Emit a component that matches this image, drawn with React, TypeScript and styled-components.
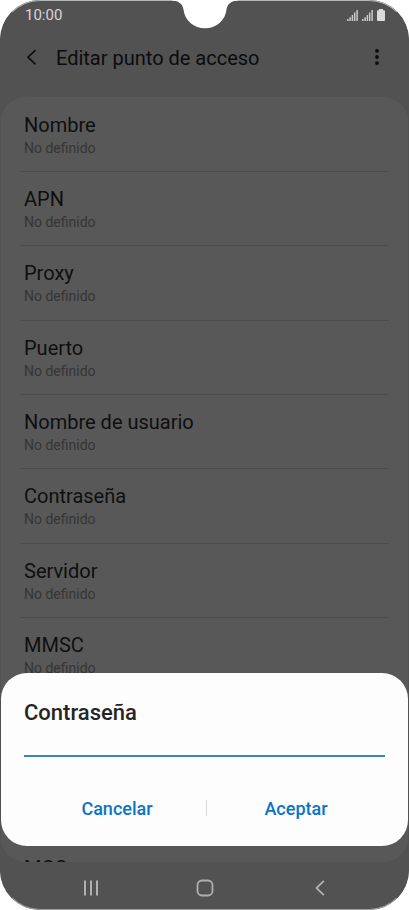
import React from 'react';
import styled, { createGlobalStyle } from 'styled-components';

const GlobalStyle = createGlobalStyle`
  * { box-sizing: border-box; }
  body { margin: 0; background: #fff; font-family: Roboto, sans-serif; }
  h1, h2, p, ul { margin: 0; padding: 0; font-weight: 400; }
  button { border: 0; padding: 0; background: none; font: inherit; color: inherit; cursor: pointer; }
  svg { display: block; }
`;

const Phone = styled.div`
  position: relative;
  display: flex;
  flex-direction: column;
  height: 100vh;
  overflow: hidden;
  border-radius: 40px;
  background: #525252;
`;

const PhoneEdge = styled.div`
  position: absolute;
  inset: 0;
  border: 1px solid #525252;
  border-top-color: #b4b8b5;
  border-bottom-color: #a0a0a0;
  border-radius: 40px;
  pointer-events: none;
`;

const Notch = styled.svg`
  position: absolute;
  top: 0;
  left: 50%;
  transform: translateX(-50%);
`;

const StatusBar = styled.div`
  display: flex;
  flex: none;
  align-items: center;
  justify-content: space-between;
  height: 30px;
  padding: 0 24px 0 25px;
  color: #d6d6d6;
  font-size: 15px;
`;

const StatusIcons = styled.div`
  display: flex;
  align-items: flex-end;
  gap: 4px;
`;

const AppBar = styled.header`
  display: flex;
  flex: none;
  align-items: center;
  height: 56px;
  margin-bottom: 11px;
  padding: 0 24px;
  color: #0c0c0c;
`;

const AppTitle = styled.h1`
  flex: 1;
  font-size: 20px;
  line-height: 24px;
`;

const IconButton = styled.button<{ $width: number }>`
  display: flex;
  width: ${({ $width }) => $width}px;
  height: 32px;
  align-items: center;
`;

const Settings = styled.ul`
  flex: 1;
  min-height: 0;
  padding: 0 20px;
  overflow: hidden;
  list-style: none;
  border-radius: 26px;
  background: #585858;
`;

const Setting = styled.li`
  height: 74px;
  padding: 16px 4px 0;
  box-shadow: 0 1px 0 #4d4d4d;
  &:nth-child(3n) { height: 75px; }
`;

const SettingName = styled.p`
  color: #0f0f0f;
  font-size: 20px;
  line-height: 24px;
`;

const SettingValue = styled.p`
  color: #353535;
  font-size: 14px;
  line-height: 22px;
`;

const NavBar = styled.nav`
  display: grid;
  flex: none;
  grid-template-columns: repeat(3, 1fr);
  height: 48px;
  padding: 3px 32px 0 34px;
  color: #b0b0b0;
`;

const NavButton = styled.button`
  display: flex;
  align-items: center;
  justify-content: center;
`;

const Dialog = styled.form`
  position: absolute;
  right: 1px;
  bottom: 64px;
  left: 1px;
  padding: 26px 23px 14px;
  border-radius: 26px;
  background: #fdfdfd;
`;

const DialogTitle = styled.label`
  display: block;
  color: #252525;
  font-size: 22px;
  font-weight: 500;
  line-height: 28px;
`;

const PasswordInput = styled.input`
  display: block;
  width: 100%;
  height: 30px;
  padding: 0;
  border: 0;
  border-bottom: 2px solid #3c86bd;
  border-radius: 0;
  outline: 0;
  background: transparent;
  font: 18px Roboto, sans-serif;
`;

const Actions = styled.div`
  display: flex;
  align-items: center;
  margin-top: 27px;
  padding-left: 4px;
`;

const ActionButton = styled.button`
  flex: 1;
  height: 48px;
  color: #0b74c8;
  font-size: 18px;
  font-weight: 500;
`;

const Divider = styled.span`
  width: 1px;
  height: 16px;
  background: #dcdcdc;
`;

const settings = [
  'Nombre', 'APN', 'Proxy', 'Puerto', 'Nombre de usuario', 'Contraseña',
  'Servidor', 'MMSC', 'Proxy MMS', 'Puerto MMS', 'MCC',
];

function Signal() {
  return (
    <svg width="11" height="12" viewBox="0 0 11 12">
      <path d="M.8 10v2M3.100 8.200V12M5.400 6v6M7.700 3.500V12M10.100 1v11" stroke="#cacaca" strokeWidth="1.500" />
    </svg>
  );
}

function Battery() {
  return (
    <svg width="8" height="12" viewBox="0 0 8 12">
      <path d="M2 0h4v1.300h1q1 0 1 1V11q0 1-1 1H1q-1 0-1-1V2.300q0-1 1-1h1z" fill="#dcdcdc" />
    </svg>
  );
}

export default function App() {
  return (
    <>
      <GlobalStyle />
      <Phone>
        <StatusBar>
          <span>10:00</span>
          <StatusIcons>
            <Signal />
            <Signal />
            <Battery />
          </StatusIcons>
        </StatusBar>
        <AppBar>
          <IconButton $width={32} aria-label="Atrás">
            <svg width="14" height="18" viewBox="0 0 14 18" fill="none" stroke="currentColor" strokeWidth="1.600">
              <path d="M11.500 1.200 4 8.200l7.500 7.200" />
            </svg>
          </IconButton>
          <AppTitle>Editar punto de acceso</AppTitle>
          <IconButton $width={16} aria-label="Más opciones">
            <svg width="16" height="18" viewBox="0 0 16 18" fill="currentColor">
              <circle cx="8" cy="1.900" r="1.900" />
              <circle cx="8" cy="8" r="1.900" />
              <circle cx="8" cy="14.100" r="1.900" />
            </svg>
          </IconButton>
        </AppBar>
        <Settings>
          {settings.map((name) => (
            <Setting key={name}>
              <SettingName>{name}</SettingName>
              <SettingValue>No definido</SettingValue>
            </Setting>
          ))}
        </Settings>
        <NavBar>
          <NavButton aria-label="Recientes">
            <svg width="16" height="16" viewBox="0 0 16 16" stroke="currentColor" strokeWidth="2">
              <path d="M2 .5v15M8 .5v15M14 .5v15" />
            </svg>
          </NavButton>
          <NavButton aria-label="Inicio">
            <svg width="18" height="18" viewBox="0 0 18 18" fill="none" stroke="currentColor" strokeWidth="1.800">
              <rect x="1.500" y="1.500" width="15" height="15" rx="4.500" />
            </svg>
          </NavButton>
          <NavButton aria-label="Volver">
            <svg width="10" height="16" viewBox="0 0 10 16" fill="none" stroke="currentColor" strokeWidth="1.800">
              <path d="M8.800.8 1.500 8l7.300 7.200" />
            </svg>
          </NavButton>
        </NavBar>
        <PhoneEdge />
        <Dialog role="dialog" onSubmit={(event) => event.preventDefault()}>
          <DialogTitle htmlFor="password">Contraseña</DialogTitle>
          <PasswordInput id="password" type="password" />
          <Actions>
            <ActionButton type="button">Cancelar</ActionButton>
            <Divider />
            <ActionButton type="submit">Aceptar</ActionButton>
          </Actions>
        </Dialog>
        <Notch width="66" height="30" viewBox="0 0 66 30">
          <path d="M0 0h66v.5C59 1 55.500 4 54.500 9.500a21.600 20.800 0 0 1-43 0C10.500 4 7 1 0 .5z" fill="#fff" />
        </Notch>
      </Phone>
    </>
  );
}
